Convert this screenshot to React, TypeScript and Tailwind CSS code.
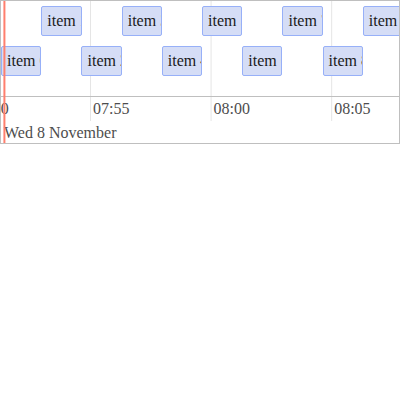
const RANGE_SECONDS = 990;
const ITEM_SECONDS = 100;
const TICK_SECONDS = 300;
const FIRST_ITEM_SECONDS = 0.3;
const FIRST_TICK_SECONDS = -78.7;
const NOW_SECONDS = 6;

const ticks = ["07:50", "07:55", "08:00", "08:05"];
const upperItems = [1, 3, 5, 7, 9];
const lowerItems = [0, 2, 4, 6, 8];

const percent = (seconds: number) => `${(seconds / RANGE_SECONDS) * 100}%`;

function ItemRow({ ids }: { ids: number[] }) {
  return (
    <div className="flex">
      {ids.map((id, index) => (
        <div
          key={id}
          className="h-[30px] shrink-0 overflow-hidden rounded-[2px] border border-[#97b0f8] bg-[#d5ddf6] p-[5px] whitespace-nowrap text-[#1a1a1a]"
          style={{
            width: percent(ITEM_SECONDS),
            marginLeft: percent(
              index === 0 ? FIRST_ITEM_SECONDS + id * ITEM_SECONDS : ITEM_SECONDS,
            ),
          }}
        >
          item {id}
        </div>
      ))}
    </div>
  );
}

export default function App() {
  return (
    <div className="relative overflow-hidden border border-[#bfbfbf] bg-white font-['Liberation_Serif',serif] text-[16px] leading-[18px]">
      <div className="relative">
        {ticks.map((label, index) => (
          <div
            key={label}
            className="absolute inset-0 border-l border-[#e5e5e5]"
            style={{
              transform: `translateX(${percent(FIRST_TICK_SECONDS + index * TICK_SECONDS)})`,
            }}
          />
        ))}
        <div className="relative flex flex-col gap-[10px] border-b border-[#bfbfbf] pt-[5px] pb-5">
          <ItemRow ids={upperItems} />
          <ItemRow ids={lowerItems} />
        </div>
        <div className="relative flex text-[#4d4d4d]">
          {ticks.map((label, index) => (
            <div
              key={label}
              className="shrink-0 p-[3px]"
              style={{
                width: percent(TICK_SECONDS),
                marginLeft: index === 0 ? percent(FIRST_TICK_SECONDS) : 0,
              }}
            >
              {label}
            </div>
          ))}
        </div>
      </div>
      <div className="px-[3px] pt-[3px] pb-px text-[#4d4d4d]">Wed 8 November</div>
      <div
        className="pointer-events-none absolute inset-0 border-l-2 border-[#ff7f6e]"
        style={{ transform: `translateX(${percent(NOW_SECONDS)})` }}
      />
    </div>
  );
}
